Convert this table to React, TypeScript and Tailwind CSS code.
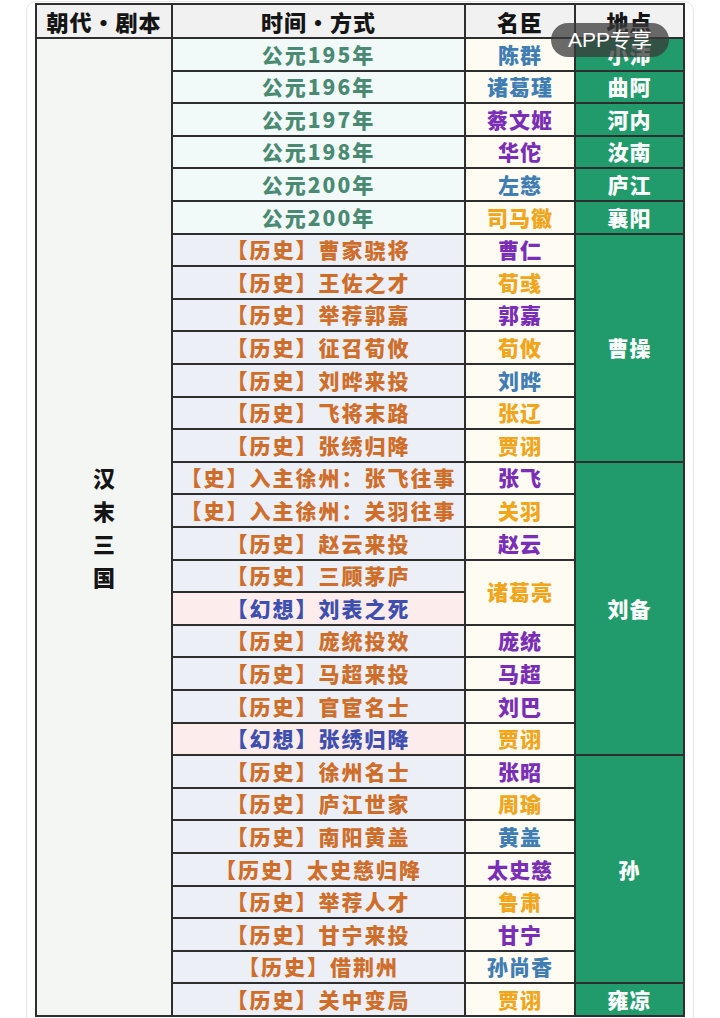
import React from 'react'

type Kind = 'year' | 'hist' | 'fan'
type Tone = 'p' | 'b' | 'y'

type Row = {
  text: string
  kind: Kind
  name?: string
  tone?: Tone
  nameSpan?: number
  place?: string
  placeSpan?: number
}

const ROWS: Row[] = [
  { text: '公元195年', kind: 'year', name: '陈群', tone: 'b', place: '小沛', placeSpan: 1 },
  { text: '公元196年', kind: 'year', name: '诸葛瑾', tone: 'b', place: '曲阿', placeSpan: 1 },
  { text: '公元197年', kind: 'year', name: '蔡文姬', tone: 'p', place: '河内', placeSpan: 1 },
  { text: '公元198年', kind: 'year', name: '华佗', tone: 'p', place: '汝南', placeSpan: 1 },
  { text: '公元200年', kind: 'year', name: '左慈', tone: 'b', place: '庐江', placeSpan: 1 },
  { text: '公元200年', kind: 'year', name: '司马徽', tone: 'y', place: '襄阳', placeSpan: 1 },
  { text: '【历史】曹家骁将', kind: 'hist', name: '曹仁', tone: 'p', place: '曹操', placeSpan: 7 },
  { text: '【历史】王佐之才', kind: 'hist', name: '荀彧', tone: 'y' },
  { text: '【历史】举荐郭嘉', kind: 'hist', name: '郭嘉', tone: 'p' },
  { text: '【历史】征召荀攸', kind: 'hist', name: '荀攸', tone: 'y' },
  { text: '【历史】刘晔来投', kind: 'hist', name: '刘晔', tone: 'b' },
  { text: '【历史】飞将末路', kind: 'hist', name: '张辽', tone: 'y' },
  { text: '【历史】张绣归降', kind: 'hist', name: '贾诩', tone: 'y' },
  { text: '【史】入主徐州：张飞往事', kind: 'hist', name: '张飞', tone: 'p', place: '刘备', placeSpan: 9 },
  { text: '【史】入主徐州：关羽往事', kind: 'hist', name: '关羽', tone: 'y' },
  { text: '【历史】赵云来投', kind: 'hist', name: '赵云', tone: 'p' },
  { text: '【历史】三顾茅庐', kind: 'hist', name: '诸葛亮', tone: 'y', nameSpan: 2 },
  { text: '【幻想】刘表之死', kind: 'fan' },
  { text: '【历史】庞统投效', kind: 'hist', name: '庞统', tone: 'p' },
  { text: '【历史】马超来投', kind: 'hist', name: '马超', tone: 'p' },
  { text: '【历史】官宦名士', kind: 'hist', name: '刘巴', tone: 'p' },
  { text: '【幻想】张绣归降', kind: 'fan', name: '贾诩', tone: 'y' },
  { text: '【历史】徐州名士', kind: 'hist', name: '张昭', tone: 'p', place: '孙', placeSpan: 7 },
  { text: '【历史】庐江世家', kind: 'hist', name: '周瑜', tone: 'y' },
  { text: '【历史】南阳黄盖', kind: 'hist', name: '黄盖', tone: 'b' },
  { text: '【历史】太史慈归降', kind: 'hist', name: '太史慈', tone: 'p' },
  { text: '【历史】举荐人才', kind: 'hist', name: '鲁肃', tone: 'y' },
  { text: '【历史】甘宁来投', kind: 'hist', name: '甘宁', tone: 'p' },
  { text: '【历史】借荆州', kind: 'hist', name: '孙尚香', tone: 'b' },
  { text: '【历史】关中变局', kind: 'hist', name: '贾诩', tone: 'y', place: '雍凉', placeSpan: 1 },
]

const KIND_CLS: Record<Kind, string> = {
  year: 'bg-[#f2f9f9] text-[#4a8a72]',
  hist: 'bg-[#edeff7] text-[#cf6e2a]',
  fan: 'bg-[#fcedec] text-[#3e4fb0]',
}

const TONE_CLS: Record<Tone, string> = {
  p: 'text-[#7a2db6]',
  b: 'text-[#3f7db3]',
  y: 'text-[#f1a51a]',
}

const SPAN_CLS: Record<number, string> = {
  1: '',
  2: 'row-span-2',
  7: 'row-span-7',
  9: 'row-span-9',
}

const cell = 'flex items-center justify-center overflow-hidden whitespace-nowrap'

export default function App() {
  const cells: React.ReactNode[] = []
  ROWS.forEach((r, i) => {
    cells.push(
      <div key={`t${i}`} className={`${cell} col-start-2 text-[21px] tracking-[2px] ${KIND_CLS[r.kind]}`}>
        {r.text}
      </div>
    )
    if (r.name) {
      cells.push(
        <div
          key={`n${i}`}
          className={`${cell} col-start-3 bg-[#fefbf3] text-[21px] tracking-[1px] ${TONE_CLS[r.tone ?? 'p']} ${SPAN_CLS[r.nameSpan ?? 1]}`}
        >
          {r.name}
        </div>
      )
    }
    if (r.place) {
      cells.push(
        <div
          key={`p${i}`}
          className={`${cell} col-start-4 bg-[#219b6b] text-[21px] tracking-[1px] text-white ${SPAN_CLS[r.placeSpan ?? 1]}`}
        >
          {r.place}
        </div>
      )
    }
  })

  return (
    <div className="w-[720px] h-[1018px] overflow-hidden bg-white" style={{ fontFamily: '"Noto Sans CJK SC", "Noto Sans", sans-serif' }}>
      <div className="relative ml-[26px] mt-[1px] w-[668px] h-[1030px] rounded-t-[10px] border border-[#e7e7e7] pl-[8px] pt-[1px]">
        <div className="grid w-[650px] h-[1014px] gap-[2px] bg-[#2e2e2e] p-[2px] font-black grid-cols-[134px_291px_108px_107px] grid-rows-[32px_repeat(30,minmax(0,1fr))]">
          <div className={`${cell} bg-[#f1f1f1] text-[22px] text-[#151515] tracking-[1px]`}>朝代·剧本</div>
          <div className={`${cell} bg-[#f1f1f1] text-[22px] text-[#151515] tracking-[1px]`}>时间·方式</div>
          <div className={`${cell} bg-[#f1f1f1] text-[22px] text-[#151515] tracking-[1px]`}>名臣</div>
          <div className={`${cell} bg-[#f1f1f1] text-[22px] text-[#151515] tracking-[1px]`}>地点</div>

          <div className="row-span-30 col-start-1 flex flex-col items-center justify-center bg-[#f4f6f4] text-[22px] leading-[33px] text-[#151515]">
            <span>汉</span>
            <span>末</span>
            <span>三</span>
            <span>国</span>
          </div>

          {cells}
        </div>

        {/* watermark pill */}
        <div className="absolute left-[524px] top-[21px] flex h-[34px] w-[118px] items-center justify-center rounded-full bg-[#3a3a3a]/75 text-[21px] text-white" style={{ fontFamily: '"Liberation Sans", "Noto Sans CJK SC", sans-serif' }}>
          APP专享
        </div>
      </div>
    </div>
  )
}
